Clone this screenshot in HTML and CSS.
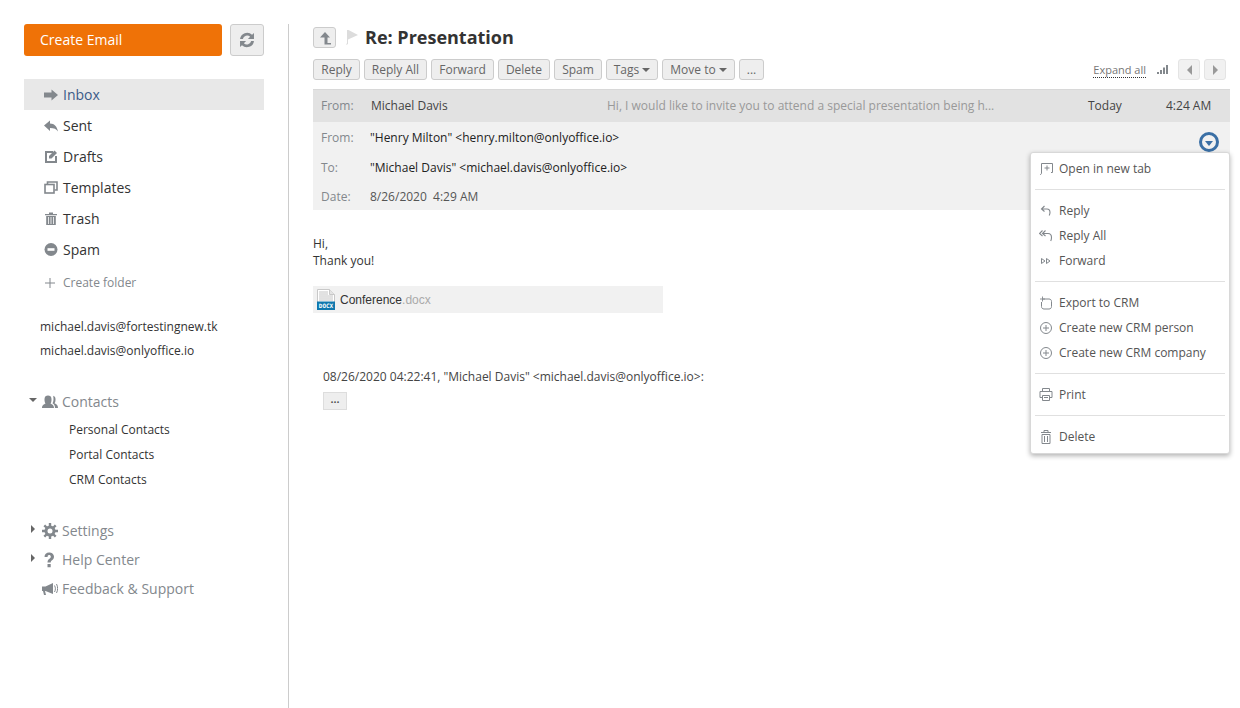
FILE: index.html
```html
<!DOCTYPE html>
<html lang="en">

<head>
  <meta charset="UTF-8">
  <meta name="viewport" content="width=device-width, initial-scale=1.0">
  <title>Re: Presentation</title>
  <link rel="stylesheet" href="styles.css">
</head>

<body>
  <aside class="side">
    <div class="side_top">
      <button class="create">Create Email</button>
      <button class="refresh" aria-label="Refresh">
        <svg width="18" height="18" viewBox="0 0 16 16"><path d="M1.800 7.200a6.300 6.300 0 0 1 10.700-3.800L14.200 1.800v5.400H8.800l2-2a3.900 3.900 0 0 0-6.500 2zM14.200 8.800a6.300 6.300 0 0 1-10.700 3.800L1.800 14.200V8.800h5.400l-2 2a3.900 3.900 0 0 0 6.500-2z" fill="#83888d"/></svg>
      </button>
    </div>

    <nav class="folders">
      <a class="folder active">
        <svg width="14" height="12" viewBox="0 0 14 12"><path d="M0 3.500h7.500V0.500L14 6l-6.500 5.500v-3H0z" fill="#83888d"/></svg>
        Inbox
      </a>
      <a class="folder">
        <svg width="14" height="12" viewBox="0 0 14 12"><path d="M0 5.500L6 0.500v3c4.500 0 7 3 8 8-1.500-2.500-4-3.500-8-3.500v3z" fill="#83888d"/></svg>
        Sent
      </a>
      <a class="folder">
        <svg width="14" height="13" viewBox="0 0 14 13"><path d="M9 2H2v10h10V6" fill="none" stroke="#83888d" stroke-width="2"/><path d="M5 6L10.500 .5 13 3 7.500 8.500H5z" fill="#83888d"/></svg>
        Drafts
      </a>
      <a class="folder">
        <svg width="14" height="13" viewBox="0 0 14 13"><path d="M3.500 3V1h9.500v8H10.500" fill="none" stroke="#83888d" stroke-width="1.600"/><rect x="1" y="3.500" width="9" height="8.500" fill="none" stroke="#83888d" stroke-width="1.600"/></svg>
        Templates
      </a>
      <a class="folder">
        <svg width="14" height="13" viewBox="0 0 14 13"><path d="M1 2h12v1.200H1zM5 .5h4V2H5zM2.200 4h9.600v9H2.200z" fill="#83888d"/><path d="M4.500 5v7M7 5v7M9.500 5v7" stroke="#fff" stroke-width=".8"/></svg>
        Trash
      </a>
      <a class="folder">
        <svg width="14" height="13" viewBox="0 0 13 13"><circle cx="6.500" cy="6.500" r="6.500" fill="#83888d"/><rect x="3" y="5.200" width="7" height="2.600" fill="#fff"/></svg>
        Spam
      </a>
    </nav>
    <a class="new_folder">
      <svg width="10" height="10" viewBox="0 0 10 10"><path d="M5 0v10M0 5h10" stroke="#83888d"/></svg>
      Create folder
    </a>

    <div class="accounts">
      <a>michael.davis@fortestingnew.tk</a>
      <a>michael.davis@onlyoffice.io</a>
    </div>

    <div class="group contacts">
      <span class="slot"><i class="caret_down"></i></span>
      <svg width="16" height="13" viewBox="0 0 16 13"><path d="M0 13c0-3 2-3.500 3.500-4.500C2.500 7 2.500 5.500 2.500 4 2.500 1.500 4 .5 6 .5s3.500 1 3.500 3.500c0 1.500 0 3-1 4.500 1.500 1 3.500 1.500 3.500 4.500z" fill="#83888d"/><path d="M11 .8c1.500.4 2.500 1.400 2.500 3.200 0 1.500 0 3-1 4.300 1.200.8 3.500 1.200 3.500 4.700h-3c0-2.500-1-4-2.500-4.800.8-1.200 1-2.800 1-4.200 0-1.500-.2-2.800-.5-4z" fill="#83888d"/></svg>
      <span>Contacts</span>
    </div>
    <div class="sub">
      <a>Personal Contacts</a>
      <a>Portal Contacts</a>
      <a>CRM Contacts</a>
    </div>

    <div class="group settings">
      <span class="slot"><i class="caret_right"></i></span>
      <svg width="16" height="16" viewBox="0 0 16 16"><path d="M8 2.500a5.500 5.500 0 1 0 0 11 5.500 5.500 0 0 0 0-11zm0 3a2.500 2.500 0 1 1 0 5 2.500 2.500 0 0 1 0-5z" fill="#83888d"/><path d="M8 0v3M8 13v3M0 8h3M13 8h3M2.300 2.300l2.200 2.200M11.500 11.500l2.200 2.200M13.700 2.300l-2.200 2.200M4.500 11.500l-2.200 2.200" stroke="#83888d" stroke-width="2.400"/></svg>
      <span>Settings</span>
    </div>
    <div class="group">
      <span class="slot"><i class="caret_right"></i></span>
      <svg width="16" height="16" viewBox="0 0 16 16"><path d="M2.500 5C2.500 2 4.500.5 7 .5s5 1.500 5 4.200c0 3.300-3.300 3.300-3.300 5.800H5.500c0-3.800 3.300-3.800 3.300-5.800 0-1-.7-1.600-1.800-1.600S5.600 3.900 5.600 5zM5.500 12h3.200v3.200H5.500z" fill="#83888d"/></svg>
      <span>Help Center</span>
    </div>
    <div class="group">
      <span class="slot"></span>
      <svg width="16" height="14" viewBox="0 0 16 14"><path d="M0 4.500h3.500L11 1v11L3.500 9H3l1 4H2L1 9H0z" fill="#83888d"/><path d="M12.500 3.500c1.200 2 1.200 4.500 0 6.500M14.500 2c1.500 3 1.500 6 0 9" fill="none" stroke="#83888d"/></svg>
      <span>Feedback &amp; Support</span>
    </div>
  </aside>

  <main class="main">
    <div class="title_row">
      <button class="back" aria-label="Back">
        <svg width="14" height="14" viewBox="0 0 14 14"><path d="M7 1l5 5.500H9.500V12H13v1.500H6.500v-7H2z" fill="#83888d"/></svg>
      </button>
      <svg class="flag" width="12" height="15" viewBox="0 0 12 15"><path d="M1 0h1.500L12 5 2 9.500V14l-2 1 1-2z" fill="#dcdcdc"/></svg>
      <h1>Re: Presentation</h1>
    </div>

    <div class="toolbar">
      <button class="btn btn_reply">Reply</button>
      <button class="btn btn_all">Reply All</button>
      <button class="btn btn_all">Forward</button>
      <button class="btn btn_delete">Delete</button>
      <button class="btn btn_spam">Spam</button>
      <button class="btn btn_tags">Tags<i class="caret_small"></i></button>
      <button class="btn btn_move">Move to<i class="caret_small"></i></button>
      <button class="btn dots">...</button>
      <div class="toolbar_right">
        <a class="expand">Expand all</a>
        <svg class="signal" width="11" height="9" viewBox="0 0 11 9"><path d="M0 7h2v2H0zM3 5h2v4H3zM6 2.500h2V9H6zM9 0h2v9H9z" fill="#83888d"/></svg>
        <button class="nav_btn" aria-label="Previous"><i class="arrow_left"></i></button>
        <button class="nav_btn" aria-label="Next"><i class="arrow_right"></i></button>
      </div>
    </div>

    <div class="msg_head">
      <span class="lbl">From:</span>
      <span class="sender">Michael Davis</span>
      <span class="preview">Hi, I would like to invite you to attend a special presentation being h...</span>
      <span class="day">Today</span>
      <span class="time">4:24 AM</span>
    </div>

    <div class="details">
      <div class="detail from">
        <span class="lbl">From:</span>
        <span class="val">"Henry Milton" &lt;henry.milton@onlyoffice.io&gt;</span>
        <button class="more" aria-label="More"><i></i></button>
      </div>
      <div class="detail to">
        <span class="lbl">To:</span>
        <span class="val">"Michael Davis" &lt;michael.davis@onlyoffice.io&gt;</span>
      </div>
      <div class="detail date">
        <span class="lbl">Date:</span>
        <span class="val grey">8/26/2020 &nbsp;4:29 AM</span>
      </div>
    </div>

    <div class="body_text">
      <p>Hi,</p>
      <p>Thank you!</p>
    </div>

    <div class="attach">
      <svg width="18" height="21" viewBox="0 0 18 21">
        <path d="M.5.500h12l5 5V14H.5z" fill="#fff" stroke="#c8c8c8"/>
        <path d="M12.500.500v5h5" fill="#e4e4e4" stroke="#c8c8c8"/>
        <path d="M2 3h9M2 5h9M2 7h14M2 9h14M2 11h14" stroke="#c4c4c4"/>
        <rect y="12.500" width="18" height="8.500" fill="#0f78ae"/>
        <text x="9" y="19.200" class="docx_label">DOCX</text>
      </svg>
      <span class="file">Conference<span class="ext">.docx</span></span>
    </div>

    <div class="quote">
      <div>08/26/2020 04:22:41, "Michael Davis" &lt;michael.davis@onlyoffice.io&gt;:</div>
      <button class="quote_btn">&bull;&bull;&bull;</button>
    </div>

    <ul class="menu">
      <li>
        <svg width="14" height="12" viewBox="0 0 14 12"><path d="M1 11.500c1 0 1.500-.5 1.500-1.500V.5h11v9H12M8 2.500v5M5.500 5h5" fill="none" stroke="#83888d"/></svg>
        Open in new tab
      </li>
      <li class="sep"></li>
      <li>
        <svg width="12" height="12" viewBox="0 0 12 12"><path d="M4.500 1L1.500 4l3 2.500M1.500 4H7c2 0 3 1.500 3 3.500 0 1-.3 2-.8 3" fill="none" stroke="#83888d" stroke-width="1.100"/></svg>
        Reply
      </li>
      <li>
        <svg width="14" height="12" viewBox="0 0 14 12"><path d="M3.500 .5L.5 3.500l3 2.500M6.500 .5l-3 3 3 2.500M3.500 3.500H9c2.500 0 3.500 2 3.500 4 0 1.200-.3 2.500-.8 3.500" fill="none" stroke="#83888d" stroke-width="1.100"/></svg>
        Reply All
      </li>
      <li>
        <svg width="14" height="12" viewBox="0 0 14 12"><path d="M2.500 3.500v5L6 6zM7.500 3.500v5L11 6z" fill="none" stroke="#83888d"/></svg>
        Forward
      </li>
      <li class="sep"></li>
      <li>
        <svg width="14" height="14" viewBox="0 0 14 14"><path d="M3.500 3H10c1.500 0 2.500 1 2.500 2.500v5c0 1.500-1 2.500-2.500 2.500H5c-1.500 0-2.500-1-2.500-2.500V6" fill="none" stroke="#83888d"/><path d="M3.500 0.500v5M1 3h5" stroke="#83888d" stroke-width=".9" fill="none"/></svg>
        Export to CRM
      </li>
      <li>
        <svg width="14" height="14" viewBox="0 0 14 14"><circle cx="7" cy="7" r="5.500" fill="none" stroke="#83888d"/><path d="M7 4v6M4 7h6" stroke="#83888d"/></svg>
        Create new CRM person
      </li>
      <li>
        <svg width="14" height="14" viewBox="0 0 14 14"><circle cx="7" cy="7" r="5.500" fill="none" stroke="#83888d"/><path d="M7 4v6M4 7h6" stroke="#83888d"/></svg>
        Create new CRM company
      </li>
      <li class="sep"></li>
      <li>
        <svg width="14" height="13" viewBox="0 0 14 13"><path d="M3.500 3.500v-3h7v3M3.500 9.500h-2.500v-6h12v6h-2.500M3.500 7.500h7v5h-7zM5 9.500h4" fill="none" stroke="#83888d"/></svg>
        Print
      </li>
      <li class="sep"></li>
      <li>
        <svg width="14" height="14" viewBox="0 0 14 14"><path d="M2 2.500h10M5 2.500v-2h4v2M3 4.500h8v9H3zM5.500 6v6M8.500 6v6" fill="none" stroke="#83888d"/></svg>
        Delete
      </li>
    </ul>
  </main>
</body>

</html>
```

FILE: styles.css
```css
* {
  box-sizing: border-box;
}

html,
body {
  height: 100%;
}

body {
  display: flex;
  margin: 0;
  overflow: hidden;
  background-color: #fff;
  font-family: "Open Sans", sans-serif;
  font-size: 12px;
  color: #333;
}

button {
  font: inherit;
  cursor: pointer;
}

p {
  margin: 0;
}

/* left column */
.side {
  flex: none;
  width: 289px;
  margin-top: 24px;
  padding: 0 24px;
  border-right: 1px solid #ccc;
}

.side_top {
  display: flex;
  gap: 8px;
}

.create {
  width: 198px;
  height: 32px;
  padding: 0 0 2px 16px;
  border: 0;
  border-radius: 3px;
  background-color: #ef7207;
  color: #fff;
  font-size: 14px;
  text-align: left;
}

.refresh {
  display: flex;
  align-items: center;
  justify-content: center;
  width: 34px;
  height: 32px;
  padding: 0;
  border: 1px solid #ccc;
  border-radius: 3px;
  background-color: #eee;
}

.folders {
  display: flex;
  flex-direction: column;
  width: 240px;
  margin-top: 23px;
}

.folder {
  display: flex;
  align-items: center;
  height: 31px;
  padding-left: 20px;
  font-size: 14px;
  color: #333;
}

.folder svg {
  flex: none;
  width: 14px;
  margin-right: 5px;
}

.folder.active {
  background-color: #e8e8e8;
  color: #3b5b88;
}

.new_folder {
  display: flex;
  align-items: center;
  height: 31px;
  margin-top: 2px;
  padding-left: 21px;
  color: #83888d;
}

.new_folder svg {
  margin-right: 8px;
}

.accounts {
  display: flex;
  flex-direction: column;
  gap: 7px;
  margin-top: 20px;
  padding-left: 16px;
}

.accounts a {
  height: 17px;
  line-height: 17px;
}

.group {
  display: flex;
  align-items: center;
  height: 29px;
  font-size: 14px;
  color: #83888d;
}

.group svg {
  flex: none;
  width: 16px;
  margin-right: 4px;
}

.slot {
  display: flex;
  flex: none;
  justify-content: center;
  width: 18px;
  margin-top: -3px;
}

.contacts {
  margin-top: 28px;
}

.settings {
  margin-top: 24px;
}

.caret_down {
  border-style: solid;
  border-width: 4px 4px 0;
  border-color: #666 transparent transparent;
}

.caret_right {
  border-style: solid;
  border-width: 4px 0 4px 4px;
  border-color: transparent transparent transparent #666;
}

.sub {
  display: flex;
  flex-direction: column;
  padding: 1px 0 0 45px;
}

.sub a {
  height: 25px;
  line-height: 25px;
}

/* message */
.main {
  position: relative;
  flex: 1;
  padding: 24px 10px 0 24px;
}

.title_row {
  display: flex;
  align-items: center;
  height: 27px;
}

.back {
  display: flex;
  align-items: center;
  justify-content: center;
  width: 23px;
  height: 21px;
  padding: 0;
  border: 1px solid #ccc;
  border-radius: 3px;
  background-color: #eee;
}

.flag {
  margin: 0 7px 0 10px;
}

h1 {
  margin: 0;
  padding-bottom: 2px;
  font-size: 18px;
  font-weight: 700;
  color: #333;
}

.toolbar {
  display: flex;
  align-items: center;
  gap: 4px;
  height: 21px;
  margin-top: 8px;
}

.btn {
  height: 21px;
  padding: 0;
  border: 1px solid #ccc;
  border-radius: 3px;
  background-color: #eee;
  color: #666;
  font-size: 12px;
  line-height: 19px;
  white-space: nowrap;
}

.btn_reply {
  width: 47px;
}

.btn_all {
  width: 63px;
}

.btn_delete {
  width: 52px;
}

.btn_spam {
  width: 48px;
}

.btn_tags {
  width: 52px;
}

.btn_move {
  width: 73px;
}

.dots {
  width: 25px;
}

.caret_small {
  display: inline-block;
  margin-left: 3px;
  vertical-align: 2px;
  border-style: solid;
  border-width: 4px 4px 0;
  border-color: #666 transparent transparent;
}

.toolbar_right {
  display: flex;
  align-items: center;
  margin-left: auto;
  padding-right: 4px;
}

.expand {
  margin-top: 2px;
  border-bottom: 1px dotted #333;
  color: #777;
  font-size: 11px;
  line-height: 14px;
}

.signal {
  margin: 0 10px 0 11px;
}

.nav_btn {
  display: flex;
  align-items: center;
  justify-content: center;
  width: 22px;
  height: 21px;
  margin-left: 4px;
  padding: 0;
  border: 1px solid #e4e4e4;
  border-radius: 3px;
  background-color: #f1f1f1;
}

.signal + .nav_btn {
  margin-left: 0;
}

.arrow_left,
.arrow_right {
  border-style: solid;
  border-color: transparent #999;
}

.arrow_left {
  border-width: 5px 5px 5px 0;
}

.arrow_right {
  border-width: 5px 0 5px 5px;
}

.msg_head {
  display: flex;
  align-items: center;
  height: 33px;
  margin-top: 9px;
  padding-bottom: 2px;
  border-top: 1px solid #d8d8d8;
  background-color: #e2e2e2;
  color: #444;
}

.lbl {
  color: #83888d;
}

.msg_head .lbl {
  width: 50px;
  margin-left: 8px;
}

.sender {
  width: 236px;
}

.preview {
  width: 481px;
  color: #999;
}

.day {
  width: 78px;
}

.details {
  height: 88px;
  background-color: #f1f1f1;
}

.detail {
  display: flex;
  align-items: center;
  padding-left: 8px;
}

.detail .lbl {
  width: 49px;
}

.detail.from {
  height: 30px;
}

.detail.to {
  height: 30px;
}

.detail.date {
  height: 28px;
}

.val {
  color: #222;
}

.val.grey {
  color: #555;
}

.more {
  position: absolute;
  top: 132px;
  right: 21px;
  display: flex;
  align-items: center;
  justify-content: center;
  width: 20px;
  height: 20px;
  padding: 0;
  border: 3px solid #3a6fa5;
  border-radius: 50%;
  background-color: #f1f1f1;
}

.more i {
  margin-top: 2px;
  border-style: solid;
  border-width: 5px 4px 0;
  border-color: #3a6fa5 transparent transparent;
}

.body_text {
  margin-top: 25px;
  line-height: 17px;
}

.attach {
  display: flex;
  align-items: center;
  width: 350px;
  height: 27px;
  margin-top: 17px;
  padding-left: 4px;
  background-color: #f1f1f1;
}

.docx_label {
  fill: #fff;
  font-family: "DejaVu Sans Mono", monospace;
  font-size: 6px;
  font-weight: 700;
  text-anchor: middle;
}

.file {
  margin-left: 5px;
  font-family: "Liberation Sans", Arial, sans-serif;
  color: #333;
}

.ext {
  color: #aaa;
}

.quote {
  margin-top: 55px;
  padding-left: 10px;
  line-height: 17px;
  color: #444;
}

.quote_btn {
  display: flex;
  align-items: center;
  justify-content: center;
  width: 24px;
  height: 18px;
  margin-top: 7px;
  padding: 0;
  border: 1px solid #ddd;
  background-color: #eee;
  color: #555;
  font-size: 8px;
}

/* dropdown over the message */
.menu {
  position: absolute;
  top: 152px;
  right: 10px;
  width: 200px;
  height: 302px;
  margin: 0;
  padding: 3px 4px;
  list-style: none;
  border: 1px solid #d8d8d8;
  border-radius: 3px;
  background-color: #fff;
  box-shadow: 0 2px 5px rgba(0, 0, 0, 0.3);
}

.menu li {
  display: flex;
  align-items: center;
  height: 25px;
  padding-left: 4px;
  color: #555;
}

.menu li svg {
  flex: none;
  width: 14px;
  margin-right: 6px;
}

.menu .sep {
  height: 1px;
  margin: 8px 0;
  padding: 0;
  background-color: #e0e0e0;
}
```
